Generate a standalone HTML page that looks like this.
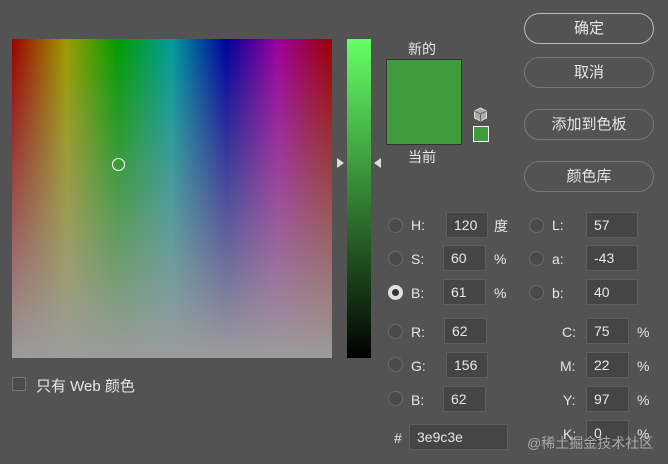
<!DOCTYPE html><html><head><style>
body{margin:0;width:668px;height:464px;background:#535353;position:relative;overflow:hidden;font-family:"Liberation Sans","Noto Sans CJK SC",sans-serif;color:#e6e6e6;font-size:14px}
.a{position:absolute}
#f{left:12px;top:39px;width:320px;height:319px;background:linear-gradient(to bottom,rgba(156,156,156,0),#9c9c9c),linear-gradient(to right,#9c0000,#9c9c00 17%,#009c00 33%,#009c9c 50%,#00009c 67%,#9c009c 83%,#9c0000)}
#s{left:347px;top:39px;width:24px;height:319px;background:linear-gradient(#66ff66,#3e9c3e 39%,#000)}
.btn{position:absolute;left:524px;width:128px;height:29px;border:1px solid #777;border-radius:16px;text-align:center;line-height:29px;font-size:15px}
.r{position:absolute;width:13px;height:13px;border:1px solid #6a6a6a;border-radius:50%;background:#4a4a4a}
.in{position:absolute;height:26px;background:#454545;border:1px solid #5e5e5e;box-sizing:border-box;line-height:25px;padding-left:7px;font-size:14px}
.l{position:absolute;font-size:14px;margin-top:1px}
</style></head><body>
<div id="f" class="a"></div>
<div class="a" style="left:112px;top:158px;width:11px;height:11px;border:1px solid #fff;border-radius:50%"></div>
<div id="s" class="a"></div>
<div class="a" style="left:337px;top:158px;width:0;height:0;border-top:5px solid transparent;border-bottom:5px solid transparent;border-left:7px solid #ddd"></div>
<div class="a" style="left:374px;top:158px;width:0;height:0;border-top:5px solid transparent;border-bottom:5px solid transparent;border-right:7px solid #ddd"></div>
<div class="l" style="left:408px;top:38px">新的</div>
<div class="a" style="left:386px;top:59px;width:74px;height:84px;background:#3e9c3e;border:1px solid #333"></div>
<div class="l" style="left:408px;top:146px">当前</div>
<svg class="a" style="left:473px;top:107px" width="15" height="15" viewBox="0 0 15 15"><path d="M7.5 1 L13.5 4 L13.5 11 L7.5 14 L1.5 11 L1.5 4 Z" fill="#aaa" stroke="#ddd" stroke-width="1"/><path d="M1.5 4 L7.5 7 L13.5 4 M7.5 7 L7.5 14" fill="none" stroke="#666" stroke-width="1"/></svg>
<div class="a" style="left:473px;top:126px;width:14px;height:14px;background:#3e9c3e;border:1px solid #fff"></div>
<div class="btn" style="top:13px;border-color:#bbb">确定</div>
<div class="btn" style="top:57px">取消</div>
<div class="btn" style="top:109px">添加到色板</div>
<div class="btn" style="top:161px">颜色库</div>
<div class="a" style="left:12px;top:377px;width:12px;height:12px;border:1px solid #777;border-radius:2px;background:#4a4a4a"></div>
<div class="l" style="left:36px;top:374px;font-size:15px">只有 Web 颜色</div>

<div class="r" style="left:388px;top:218px"></div><div class="l" style="left:411px;top:216px">H:</div><div class="in" style="left:446px;top:212px;width:42px">120</div><div class="l" style="left:494px;top:215px">度</div>
<div class="r" style="left:388px;top:251px"></div><div class="l" style="left:411px;top:250px">S:</div><div class="in" style="left:443px;top:245px;width:43px">60</div><div class="l" style="left:494px;top:250px">%</div>
<div class="a" style="left:388px;top:285px;width:7px;height:7px;border:4px solid #e0e0e0;border-radius:50%;background:#333"></div><div class="l" style="left:411px;top:284px">B:</div><div class="in" style="left:443px;top:279px;width:43px">61</div><div class="l" style="left:494px;top:284px">%</div>
<div class="r" style="left:388px;top:324px"></div><div class="l" style="left:411px;top:323px">R:</div><div class="in" style="left:444px;top:318px;width:43px">62</div>
<div class="r" style="left:388px;top:357px"></div><div class="l" style="left:411px;top:357px">G:</div><div class="in" style="left:446px;top:352px;width:42px">156</div>
<div class="r" style="left:388px;top:391px"></div><div class="l" style="left:411px;top:391px">B:</div><div class="in" style="left:443px;top:386px;width:43px">62</div>

<div class="r" style="left:529px;top:218px"></div><div class="l" style="left:552px;top:216px">L:</div><div class="in" style="left:586px;top:212px;width:52px">57</div>
<div class="r" style="left:529px;top:251px"></div><div class="l" style="left:552px;top:250px">a:</div><div class="in" style="left:586px;top:245px;width:52px">-43</div>
<div class="r" style="left:529px;top:285px"></div><div class="l" style="left:552px;top:284px">b:</div><div class="in" style="left:586px;top:279px;width:52px">40</div>
<div class="l" style="left:562px;top:323px">C:</div><div class="in" style="left:586px;top:318px;width:43px">75</div><div class="l" style="left:637px;top:323px">%</div>
<div class="l" style="left:560px;top:357px">M:</div><div class="in" style="left:586px;top:352px;width:43px">22</div><div class="l" style="left:637px;top:357px">%</div>
<div class="l" style="left:563px;top:391px">Y:</div><div class="in" style="left:586px;top:386px;width:43px">97</div><div class="l" style="left:637px;top:391px">%</div>
<div class="l" style="left:563px;top:425px">K:</div><div class="in" style="left:586px;top:420px;width:43px">0</div><div class="l" style="left:637px;top:425px">%</div>
<div class="l" style="left:394px;top:429px">#</div><div class="in" style="left:409px;top:424px;width:99px;height:26px">3e9c3e</div>
<div class="l" style="left:527px;top:432px;color:#aaa;font-size:14px">@稀土掘金技术社区</div>
</body></html>
